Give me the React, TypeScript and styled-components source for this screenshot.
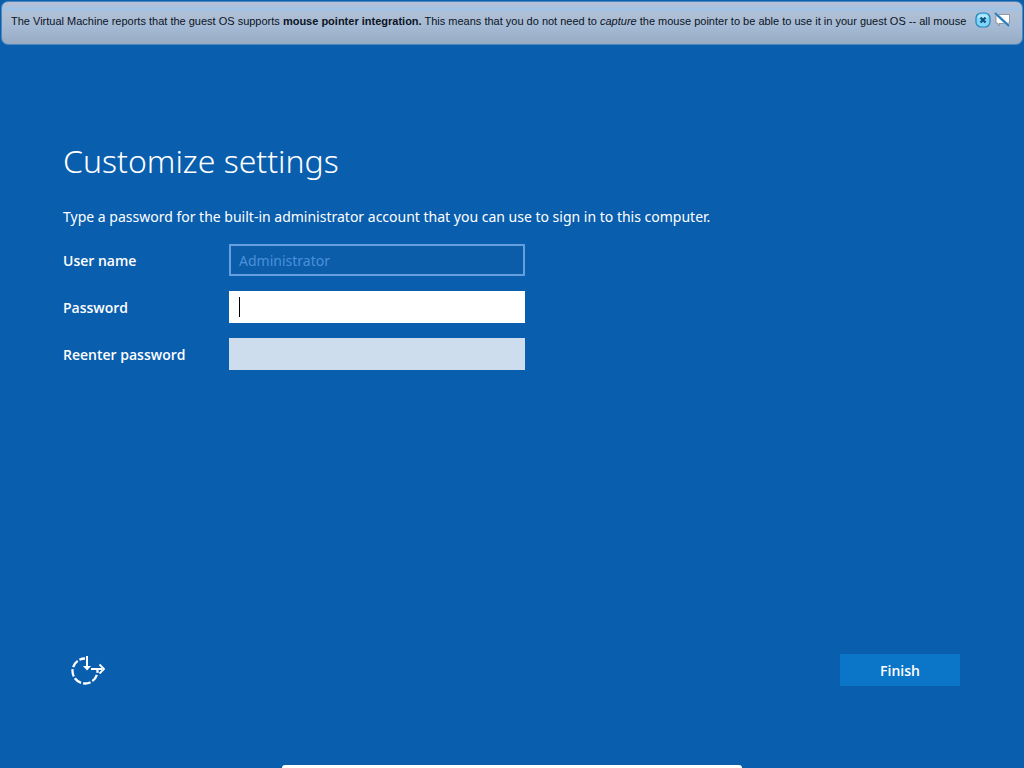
import React from 'react';
import styled, { createGlobalStyle, css } from 'styled-components';

const uiFont = '"Open Sans", "Noto Sans", sans-serif';
const textFont = '"Noto Sans", "Open Sans", sans-serif';

const GlobalStyle = createGlobalStyle`
  *, *::before, *::after { box-sizing: border-box; }
  body {
    margin: 0;
    background: #095eae;
    color: #fff;
    font-family: ${uiFont};
  }
`;

const Screen = styled.div`
  display: flex;
  flex-direction: column;
  min-height: 100vh;
  overflow: hidden;
`;

const Banner = styled.aside`
  display: flex;
  align-items: flex-start;
  gap: 3px;
  margin: 1px 1px 0;
  min-height: 44px;
  padding: 9px 11px 0 9px;
  border: 1px solid #4d86bb;
  border-radius: 7px;
  background: linear-gradient(#b3bfd6 0, #b3bfd6 3px, #9fc3e8 7px, #b0bfd4 11px, #a5bad4 24px, #97abc4 100%);
  color: #0a1426;
`;

const BannerText = styled.p`
  flex: 1;
  margin: 0;
  overflow: hidden;
  white-space: nowrap;
  font: 11px/20px "Liberation Sans", Arial, sans-serif;
`;

const IconButton = styled.button`
  display: flex;
  padding: 1px 0 0;
  border: 0;
  background: none;
`;

const Main = styled.main`
  flex: 1;
  padding: 92px 64px 0 63px;
`;

const Title = styled.h1`
  margin: 0;
  font: 300 32px/48px ${textFont};
`;

const Intro = styled.p`
  margin: 21px 0 16px;
  font: 14px/22px ${textFont};
`;

const Form = styled.form`
  display: grid;
  gap: 15px;
`;

const Row = styled.div`
  display: grid;
  grid-template-columns: 166px minmax(0, 296px);
  align-items: center;
`;

const Label = styled.label`
  padding-top: 2px;
  font-size: 14px;
  line-height: 20px;
  font-weight: 600;
`;

const FieldBox = styled.div`
  position: relative;
  display: flex;
`;

type Variant = 'disabled' | 'active' | 'idle';

const Input = styled.input<{ $variant: Variant }>`
  width: 100%;
  height: 32px;
  padding: 0 8px;
  border: 2px solid transparent;
  border-radius: 0;
  outline: 0;
  font: 14px/20px ${textFont};
  color: #000;
  ${({ $variant }) =>
    $variant === 'disabled'
      ? css`
          background: #0c5da9;
          border-color: #669fdf;
          color: #4a90db;
        `
      : css`
          background: ${$variant === 'active' ? '#fff' : '#cddded'};
        `}
`;

const Caret = styled.span`
  position: absolute;
  left: 10px;
  top: 6px;
  width: 1px;
  height: 20px;
  background: #000;
`;

const Footer = styled.footer`
  display: flex;
  align-items: center;
  justify-content: space-between;
  padding: 0 64px 0 70px;
`;

const FinishButton = styled.button`
  width: 120px;
  height: 32px;
  padding: 2px 0 0;
  border: 0;
  background: #0b75c8;
  color: #fff;
  font: 600 14px/20px ${uiFont};
`;

const BottomSheet = styled.div`
  width: 45%;
  height: 3px;
  margin: 79px auto 0;
  border-radius: 8px 8px 0 0;
  background: #fff;
`;

const CloseIcon = () => (
  <svg width="16" height="16" viewBox="0 0 16 16" aria-hidden="true">
    <rect x="1" y="1" width="14" height="14" rx="5" fill="#7fd4f7" stroke="#2384ba" strokeWidth="1.2" />
    <path d="M3 6Q3 2.500 6 2.500H10Q13 2.500 13 6Z" fill="#b4e9fc" />
    <path d="M5.500 5.500L10.500 10.500M10.500 5.500L5.500 10.500" stroke="#11517f" strokeWidth="2.200" />
  </svg>
);

const MuteIcon = () => (
  <svg width="17" height="16" viewBox="0 0 17 16" aria-hidden="true">
    <path d="M2 2.500H15.500V11H13.500V14L11 11.500H5V14L3.500 11H2Z" fill="#fff" stroke="#7c8791" strokeWidth="0.8" />
    <path d="M1 1L15 14" stroke="#a9c5e0" strokeWidth="3" />
    <path d="M1 1L15 14" stroke="#257cb8" strokeWidth="1.8" />
  </svg>
);

const EaseOfAccessIcon = () => (
  <svg width="36" height="32" viewBox="0 0 36 32" fill="none" stroke="#fff" aria-hidden="true">
    <circle cx="15" cy="17" r="12.500" strokeWidth="2.300" strokeDasharray="7.800 2" strokeDashoffset="-4" pathLength="78.400" />
    <path d="M15 1H36V16H15Z" fill="#095eae" stroke="none" />
    <path d="M17 2V14M21 15H32" strokeWidth="2" />
    <path d="M13 12H21L17 16.500Z" fill="#fff" stroke="none" />
    <path d="M29.500 10.500L34 15L29.500 19.500" strokeWidth="1.800" />
  </svg>
);

export default function App() {
  return (
    <>
      <GlobalStyle />
      <Screen>
        <Banner>
          <BannerText>
            The Virtual Machine reports that the guest OS supports <b>mouse pointer integration.</b> This means that you do
            not need to <i>capture</i> the mouse pointer to be able to use it in your guest OS -- all mouse
          </BannerText>
          <IconButton aria-label="Close message"><CloseIcon /></IconButton>
          <IconButton aria-label="Do not show again"><MuteIcon /></IconButton>
        </Banner>
        <Main>
          <Title>Customize settings</Title>
          <Intro>Type a password for the built-in administrator account that you can use to sign in to this computer.</Intro>
          <Form id="account">
            <Row>
              <Label htmlFor="user">User name</Label>
              <FieldBox><Input id="user" $variant="disabled" defaultValue="Administrator" disabled /></FieldBox>
            </Row>
            <Row>
              <Label htmlFor="password">Password</Label>
              <FieldBox>
                <Input id="password" type="password" $variant="active" />
                <Caret />
              </FieldBox>
            </Row>
            <Row>
              <Label htmlFor="reenter">Reenter password</Label>
              <FieldBox><Input id="reenter" type="password" $variant="idle" /></FieldBox>
            </Row>
          </Form>
        </Main>
        <Footer>
          <IconButton aria-label="Ease of access"><EaseOfAccessIcon /></IconButton>
          <FinishButton type="submit" form="account">Finish</FinishButton>
        </Footer>
        <BottomSheet />
      </Screen>
    </>
  );
}
